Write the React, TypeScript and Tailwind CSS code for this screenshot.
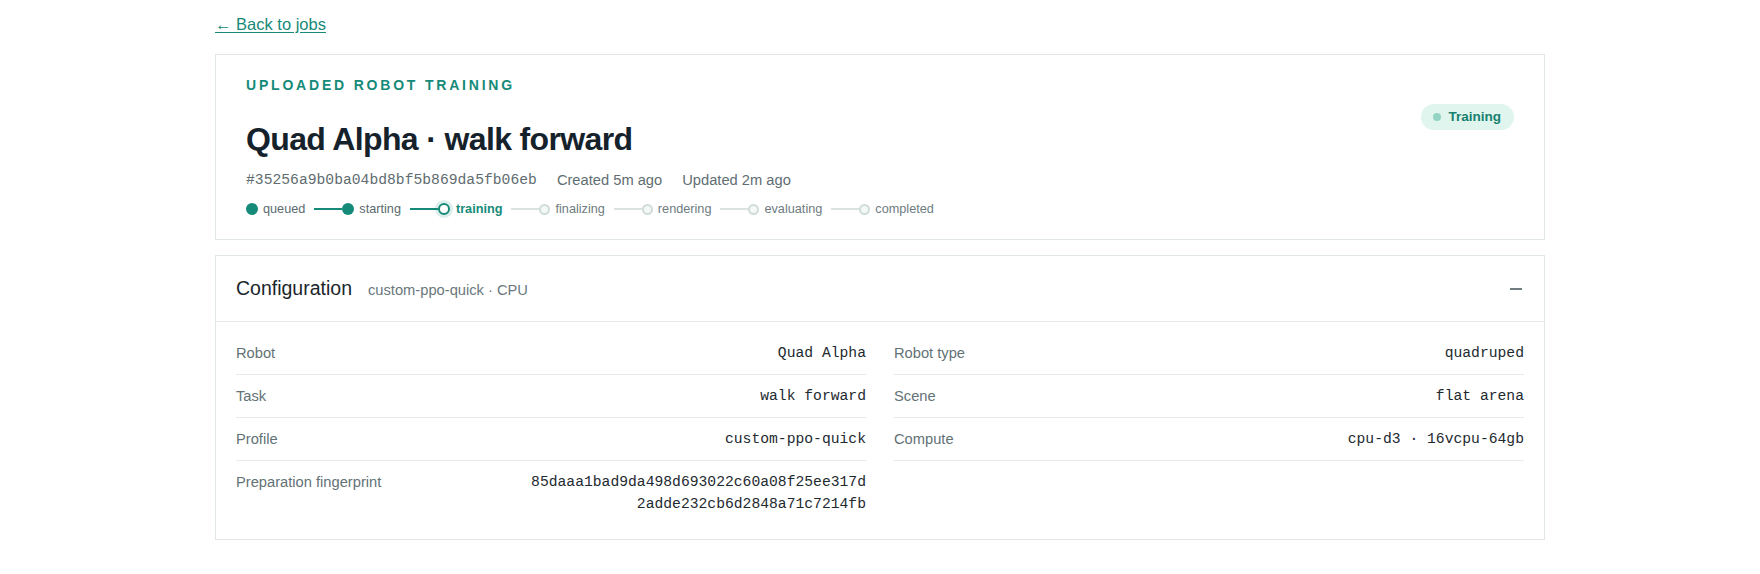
import React from "react";

type StepState = "done" | "current" | "todo";

const steps: { name: string; state: StepState }[] = [
  { name: "queued", state: "done" },
  { name: "starting", state: "done" },
  { name: "training", state: "current" },
  { name: "finalizing", state: "todo" },
  { name: "rendering", state: "todo" },
  { name: "evaluating", state: "todo" },
  { name: "completed", state: "todo" },
];

const details: { label: string; value: string }[] = [
  { label: "Robot", value: "Quad Alpha" },
  { label: "Robot type", value: "quadruped" },
  { label: "Task", value: "walk forward" },
  { label: "Scene", value: "flat arena" },
  { label: "Profile", value: "custom-ppo-quick" },
  { label: "Compute", value: "cpu-d3 · 16vcpu-64gb" },
  { label: "Preparation fingerprint", value: "85daaa1bad9da498d693022c60a08f25ee317d2adde232cb6d2848a71c7214fb" },
];

const sans = "font-['Liberation_Sans',Arial,sans-serif]";
const mono = "font-['Liberation_Mono','Courier_New',monospace]";

const StepDot = ({ state }: { state: StepState }) => {
  if (state === "done") return <span className="w-3 h-3 rounded-full bg-[#168a78] shrink-0" />;
  if (state === "current")
    return <span className="w-3 h-3 rounded-full border-2 border-[#168a78] bg-white ring-[3px] ring-[#168a78]/15 shrink-0" />;
  return <span className="w-[11px] h-[11px] rounded-full border-2 border-[#cfdcda] bg-[#f4f8f7] shrink-0" />;
};

const Stepper = () => (
  <ol className="flex items-center gap-[9px] text-[12.7px] leading-[18px]">
    {steps.map((s, i) => (
      <li key={s.name} className="flex items-center">
        {i > 0 && (
          <span className={s.state === "todo" ? "w-7 h-[2px] bg-[#dbe3e2]" : "w-7 h-[2px] bg-[#168a78]"} />
        )}
        <StepDot state={s.state} />
        <span
          className={
            s.state === "current"
              ? "ml-[6px] text-[#168a78] font-semibold"
              : s.state === "done"
              ? "ml-[5px] text-[#5b6a6e]"
              : "ml-[5px] text-[#6e7c80]"
          }
        >
          {s.name}
        </span>
      </li>
    ))}
  </ol>
);

const App = () => {
  return (
    <div className={`min-h-screen bg-white ${sans}`}>
      <div className="w-[1330px] mx-auto pt-[12px] pb-8">
        <a href="#" className="inline-block text-[16.5px] leading-6 text-[#168a78] underline underline-offset-2">
          ← Back to jobs
        </a>

        <section className="mt-[17px] border border-[#e1e6e7] px-[30px] pt-[20px] pb-[21px]">
          <div className="flex items-center justify-between">
            <div>
              <p className="text-[14px] leading-5 font-bold tracking-[0.2em] uppercase text-[#168a78]">
                Uploaded robot training
              </p>
              <h1 className="mt-6 text-[32px] leading-10 font-bold tracking-[-0.02em] text-[#16222b]">
                Quad Alpha · walk forward
              </h1>
            </div>
            <span className="flex items-center gap-[7px] h-[26px] pl-3 pr-[13px] rounded-full bg-[#e0f5ee] text-[13.5px] font-bold text-[#17806f]">
              <span className="w-2 h-2 rounded-full bg-[#93d3c3]" />
              Training
            </span>
          </div>
          <div className="mt-[10px] flex items-center gap-5 text-[14.7px] leading-[22px] text-[#5f6e72]">
            <span className={`${mono} text-[#5f6c70]`}>#35256a9b0ba04bd8bf5b869da5fb06eb</span>
            <span>Created 5m ago</span>
            <span>Updated 2m ago</span>
          </div>
          <div className="mt-[9px]">
            <Stepper />
          </div>
        </section>

        <section className="mt-[15px] border border-[#e1e6e7]">
          <header className="h-[66px] px-5 flex items-center justify-between border-b border-[#e6eaeb]">
            <div className="flex items-baseline gap-4">
              <h2 className="text-[19.5px] text-[#1b262c]">Configuration</h2>
              <span className="text-[14.7px] text-[#6a787c]">custom-ppo-quick · CPU</span>
            </div>
            <span className="w-3 h-[2px] bg-[#6f7d82] mr-[2px]" />
          </header>
          <dl className="grid grid-cols-2 gap-x-[28px] px-5 pt-[10px] pb-[14px] text-[14.7px] leading-[22px]">
            {details.map((d) => (
              <div
                key={d.label}
                className="flex items-start justify-between gap-6 py-[10px] border-b border-[#e6eaeb] last:border-b-0"
              >
                <dt className="text-[#637276] whitespace-nowrap">{d.label}</dt>
                <dd className={`${mono} text-[#1e2a30] text-right max-w-[336px] break-all`}>{d.value}</dd>
              </div>
            ))}
          </dl>
        </section>
      </div>
    </div>
  );
};

export default App;
